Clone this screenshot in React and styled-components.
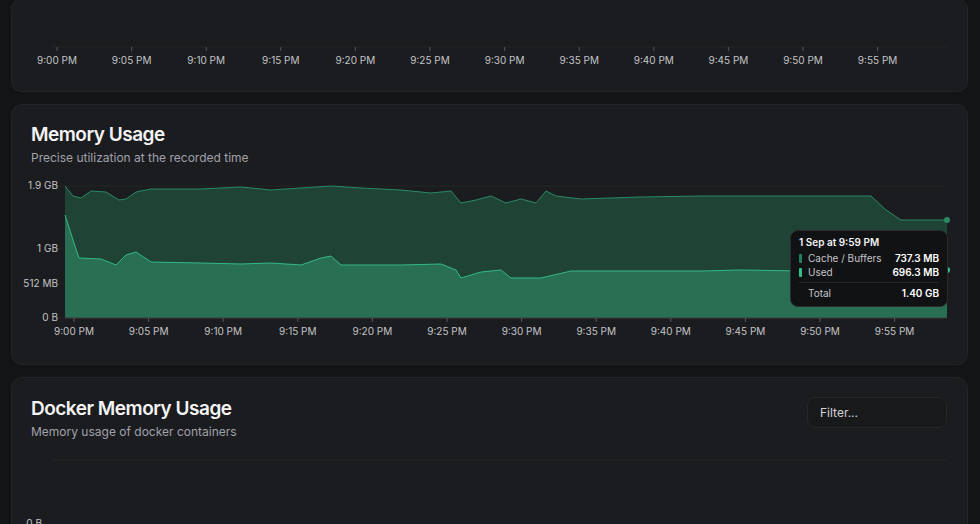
import React from "react";
import styled, { createGlobalStyle } from "styled-components";

const G = createGlobalStyle`
  body{margin:0;background:#131416;font-family:Inter,"Noto Sans",sans-serif;color:#f4f4f5;overflow:hidden;}
`;
const Page = styled.div`
  display:flex;flex-direction:column;gap:12px;padding:0 12px 0 11px;margin-top:-2px;height:526px;overflow:hidden;
`;
const Card = styled.div`
  position:relative;background:#1b1c1f;border:1px solid #232427;border-radius:11px;
  height:${p => p.h}px;flex-shrink:0;overflow:hidden;
`;
const Head = styled.div`
  display:flex;justify-content:space-between;align-items:flex-start;padding:${p => p.pt}px 20px 0 19px;
`;
const Title = styled.div`font-size:19px;font-weight:600;letter-spacing:-0.5px;line-height:24px;`;
const Sub = styled.div`font-size:12px;color:#a1a1aa;margin-top:3px;`;
const Filter = styled.div`
  width:140px;height:31px;border:1px solid #26272a;border-radius:8px;background:#18191b;
  font-size:12px;color:#d4d4d8;display:flex;align-items:center;padding-left:12px;box-sizing:border-box;
`;
const Tip = styled.div`
  position:absolute;left:778px;top:125px;width:158px;background:#111214;border:1px solid #2a2b2e;
  border-radius:8px;padding:5px 8px 6px;box-sizing:border-box;font-size:10px;white-space:nowrap;
`;
const TipT = styled.div`font-weight:600;margin-bottom:3px;`;
const Row = styled.div`display:flex;align-items:center;gap:6px;color:#c4c4c8;height:14px;
  b{margin-left:auto;color:#fff;font-weight:600;}`;
const Sw = styled.span`width:3px;height:9px;border-radius:1px;background:${p => p.c};`;
const Sep = styled.div`border-top:1px solid #26272a;margin:3px 0;`;

const times = ["9:00 PM","9:05 PM","9:10 PM","9:15 PM","9:20 PM","9:25 PM","9:30 PM","9:35 PM","9:40 PM","9:45 PM","9:50 PM","9:55 PM"];
const top = [[64,186],[72,196],[80,198],[90,191],[105,192],[118,200],[125,199],[135,192],[150,189],[200,189],[240,187],[270,190],[300,188],[330,186],[360,188],[400,190],[430,193],[450,191],[460,203],[475,200],[490,196],[505,203],[520,199],[535,203],[545,191],[555,196],[580,199],[640,197],[700,196],[760,196],[870,196],[885,210],[900,220],[946,220]];
const low = [[64,215],[72,240],[78,258],[100,259],[115,265],[125,255],[135,252],[150,262],[200,263],[240,264],[270,263],[300,265],[320,258],[330,256],[340,265],[400,265],[440,264],[455,270],[460,278],[480,272],[500,270],[510,278],[540,278],[570,271],[640,271],[700,271],[740,270],[800,271],[946,270]];
const OX = 11, OY = 105;
const pts = a => a.map(([x,y]) => `${x-OX},${y-OY}`).join(" L");
const area = a => `M${pts(a)} L${946-OX},${318-OY} L${64-OX},${318-OY}Z`;

function Axis({ y, x0 }) {
  return times.map((t,i) => {
    const x = x0 + i*74.6;
    return <g key={t}><line x1={x} x2={x} y1={y} y2={y+4} stroke="#55565a"/>
      <text x={x} y={y+17} fill="#c4c4c8" fontSize="10" textAnchor="middle">{t}</text></g>;
  });
}

export default function App() {
  return (<><G/><Page>
    <Card h={92}>
      <svg width="957" height="92" style={{display:"block"}}>
        <line x1="40" x2="935" y1="48" y2="48" stroke="#232427"/>
        <Axis y={48} x0={45}/>
      </svg>
    </Card>
    <Card h={259}>
      <Head pt={18}><div><Title>Memory Usage</Title><Sub>Precise utilization at the recorded time</Sub></div></Head>
      <svg width="957" height="259" style={{position:"absolute",left:0,top:0}}>
        {[[186,"1.9 GB"],[249,"1 GB"],[284,"512 MB"],[318,"0 B"]].map(([y,l]) =>
          <g key={l}><line x1={53-OX} x2={935} y1={y-OY} y2={y-OY} stroke="#232427"/>
          <text x={57-OX} y={y-OY+3} fill="#c4c4c8" fontSize="10" textAnchor="end">{l}</text></g>)}
        <path d={area(top)} fill="#1f4436"/>
        <path d={"M"+pts(top)} fill="none" stroke="#2a8a65" strokeWidth="1"/>
        <path d={area(low)} fill="#296f53"/>
        <path d={"M"+pts(low)} fill="none" stroke="#34b985" strokeWidth="1"/>
        <circle cx={946-OX} cy={220-OY} r="3" fill="#2a8a65"/>
        <circle cx={946-OX} cy={270-OY} r="3" fill="#34c08a"/>
        <line x1={64-OX} x2={946-OX} y1={318-OY} y2={318-OY} stroke="#3a3b3f"/>
        <Axis y={318-OY} x0={73-OX}/>
      </svg>
      <Tip>
        <TipT>1 Sep at 9:59 PM</TipT>
        <Row><Sw c="#23805e"/>Cache / Buffers<b>737.3 MB</b></Row>
        <Row><Sw c="#34c08a"/>Used<b>696.3 MB</b></Row>
        <Sep/>
        <Row><Sw c="transparent"/>Total<b>1.40 GB</b></Row>
      </Tip>
    </Card>
    <Card h={200}>
      <Head pt={19}><div><Title>Docker Memory Usage</Title><Sub>Memory usage of docker containers</Sub></div><Filter>Filter...</Filter></Head>
      <svg width="957" height="200" style={{position:"absolute",left:0,top:0}}>
        <line x1="40" x2="935" y1="82" y2="82" stroke="#232427"/>
        <text x="30" y="149" fill="#c4c4c8" fontSize="10" textAnchor="end">0 B</text>
        <line x1="40" x2="935" y1="147" y2="147" stroke="#7b6bd0" strokeWidth="2"/>
      </svg>
    </Card>
  </Page></>);
}
